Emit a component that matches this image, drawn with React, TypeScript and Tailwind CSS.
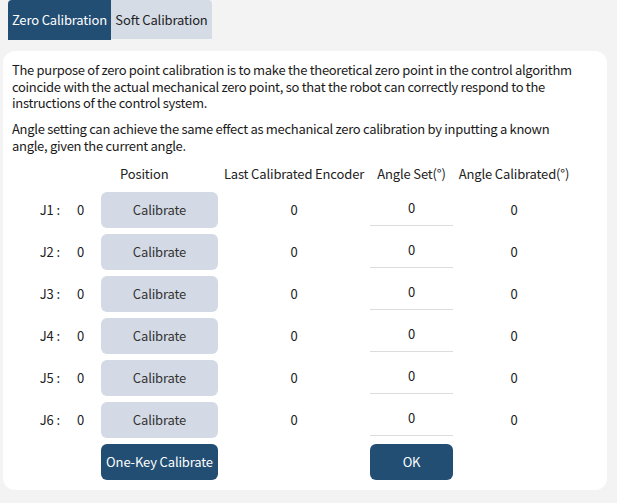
import React from "react";

const rows = ["J1", "J2", "J3", "J4", "J5", "J6"];

export default function App() {
  return (
    <div
      className="w-[617px] h-[503px] bg-[#f3f3f3] text-[13px] text-[#222] overflow-hidden tracking-[-0.15px]"
      style={{ fontFamily: '"Noto Sans CJK SC", "Noto Sans", sans-serif' }}
    >
      <div className="flex pl-[8px] h-[40px] items-start">
        <div className="h-[40px] w-[103px] bg-[#224e74] text-white rounded-tl-[4px] flex items-center justify-center">
          Zero Calibration
        </div>
        <div className="h-[39px] w-[101px] bg-[#d5dce6] text-[#222] rounded-tr-[4px] flex items-center justify-center">
          Soft Calibration
        </div>
      </div>
      <div className="mt-[11px] ml-[3px] w-[604px] h-[439px] bg-white rounded-[12px] px-[9px] pt-[11px] pb-[10px] flex flex-col">
        <p className="leading-[16.5px] text-[#1a1a1a] tracking-[-0.3px] whitespace-nowrap">
          The purpose of zero point calibration is to make the theoretical zero point in the control algorithm
          <br />
          coincide with the actual mechanical zero point, so that the robot can correctly respond to the
          <br />
          instructions of the control system.
        </p>
        <p className="leading-[16.5px] text-[#1a1a1a] mt-[9.5px] tracking-[-0.3px] whitespace-nowrap">
          Angle setting can achieve the same effect as mechanical zero calibration by inputting a known
          <br />
          angle, given the current angle.
        </p>
        <div className="grid grid-cols-[89px_117px_152px_83px_122px] gap-y-[6px] mt-[7.5px] text-[#222]">
          <div className="h-[24px]" />
          <div className="h-[24px] flex items-center justify-start pl-[19px]">Position</div>
          <div className="h-[24px] flex items-center justify-center whitespace-nowrap">Last Calibrated Encoder</div>
          <div className="h-[24px] flex items-center justify-center whitespace-nowrap">Angle Set(°)</div>
          <div className="h-[24px] flex items-center justify-center whitespace-nowrap">Angle Calibrated(°)</div>
          {rows.map((j) => (
            <React.Fragment key={j}>
              <div className="h-[36px] flex items-center justify-end pr-[17px] gap-[17px]">
                <span>{j}&nbsp;:</span>
                <span>0</span>
              </div>
              <button className="h-[36px] w-[117px] bg-[#d3dae5] rounded-[6px] text-[#333] flex items-center justify-center">
                Calibrate
              </button>
              <div className="h-[36px] flex items-center justify-center">0</div>
              <div className="h-[34px] border-b border-[#dcdcdc] flex items-center justify-center">0</div>
              <div className="h-[36px] flex items-center justify-center">0</div>
            </React.Fragment>
          ))}
          <div />
          <button className="h-[36px] w-[117px] bg-[#224e74] rounded-[6px] text-white flex items-center justify-center">
            One-Key Calibrate
          </button>
          <div />
          <button className="h-[36px] w-[83px] bg-[#224e74] rounded-[6px] text-white flex items-center justify-center">
            OK
          </button>
          <div />
        </div>
      </div>
    </div>
  );
}
